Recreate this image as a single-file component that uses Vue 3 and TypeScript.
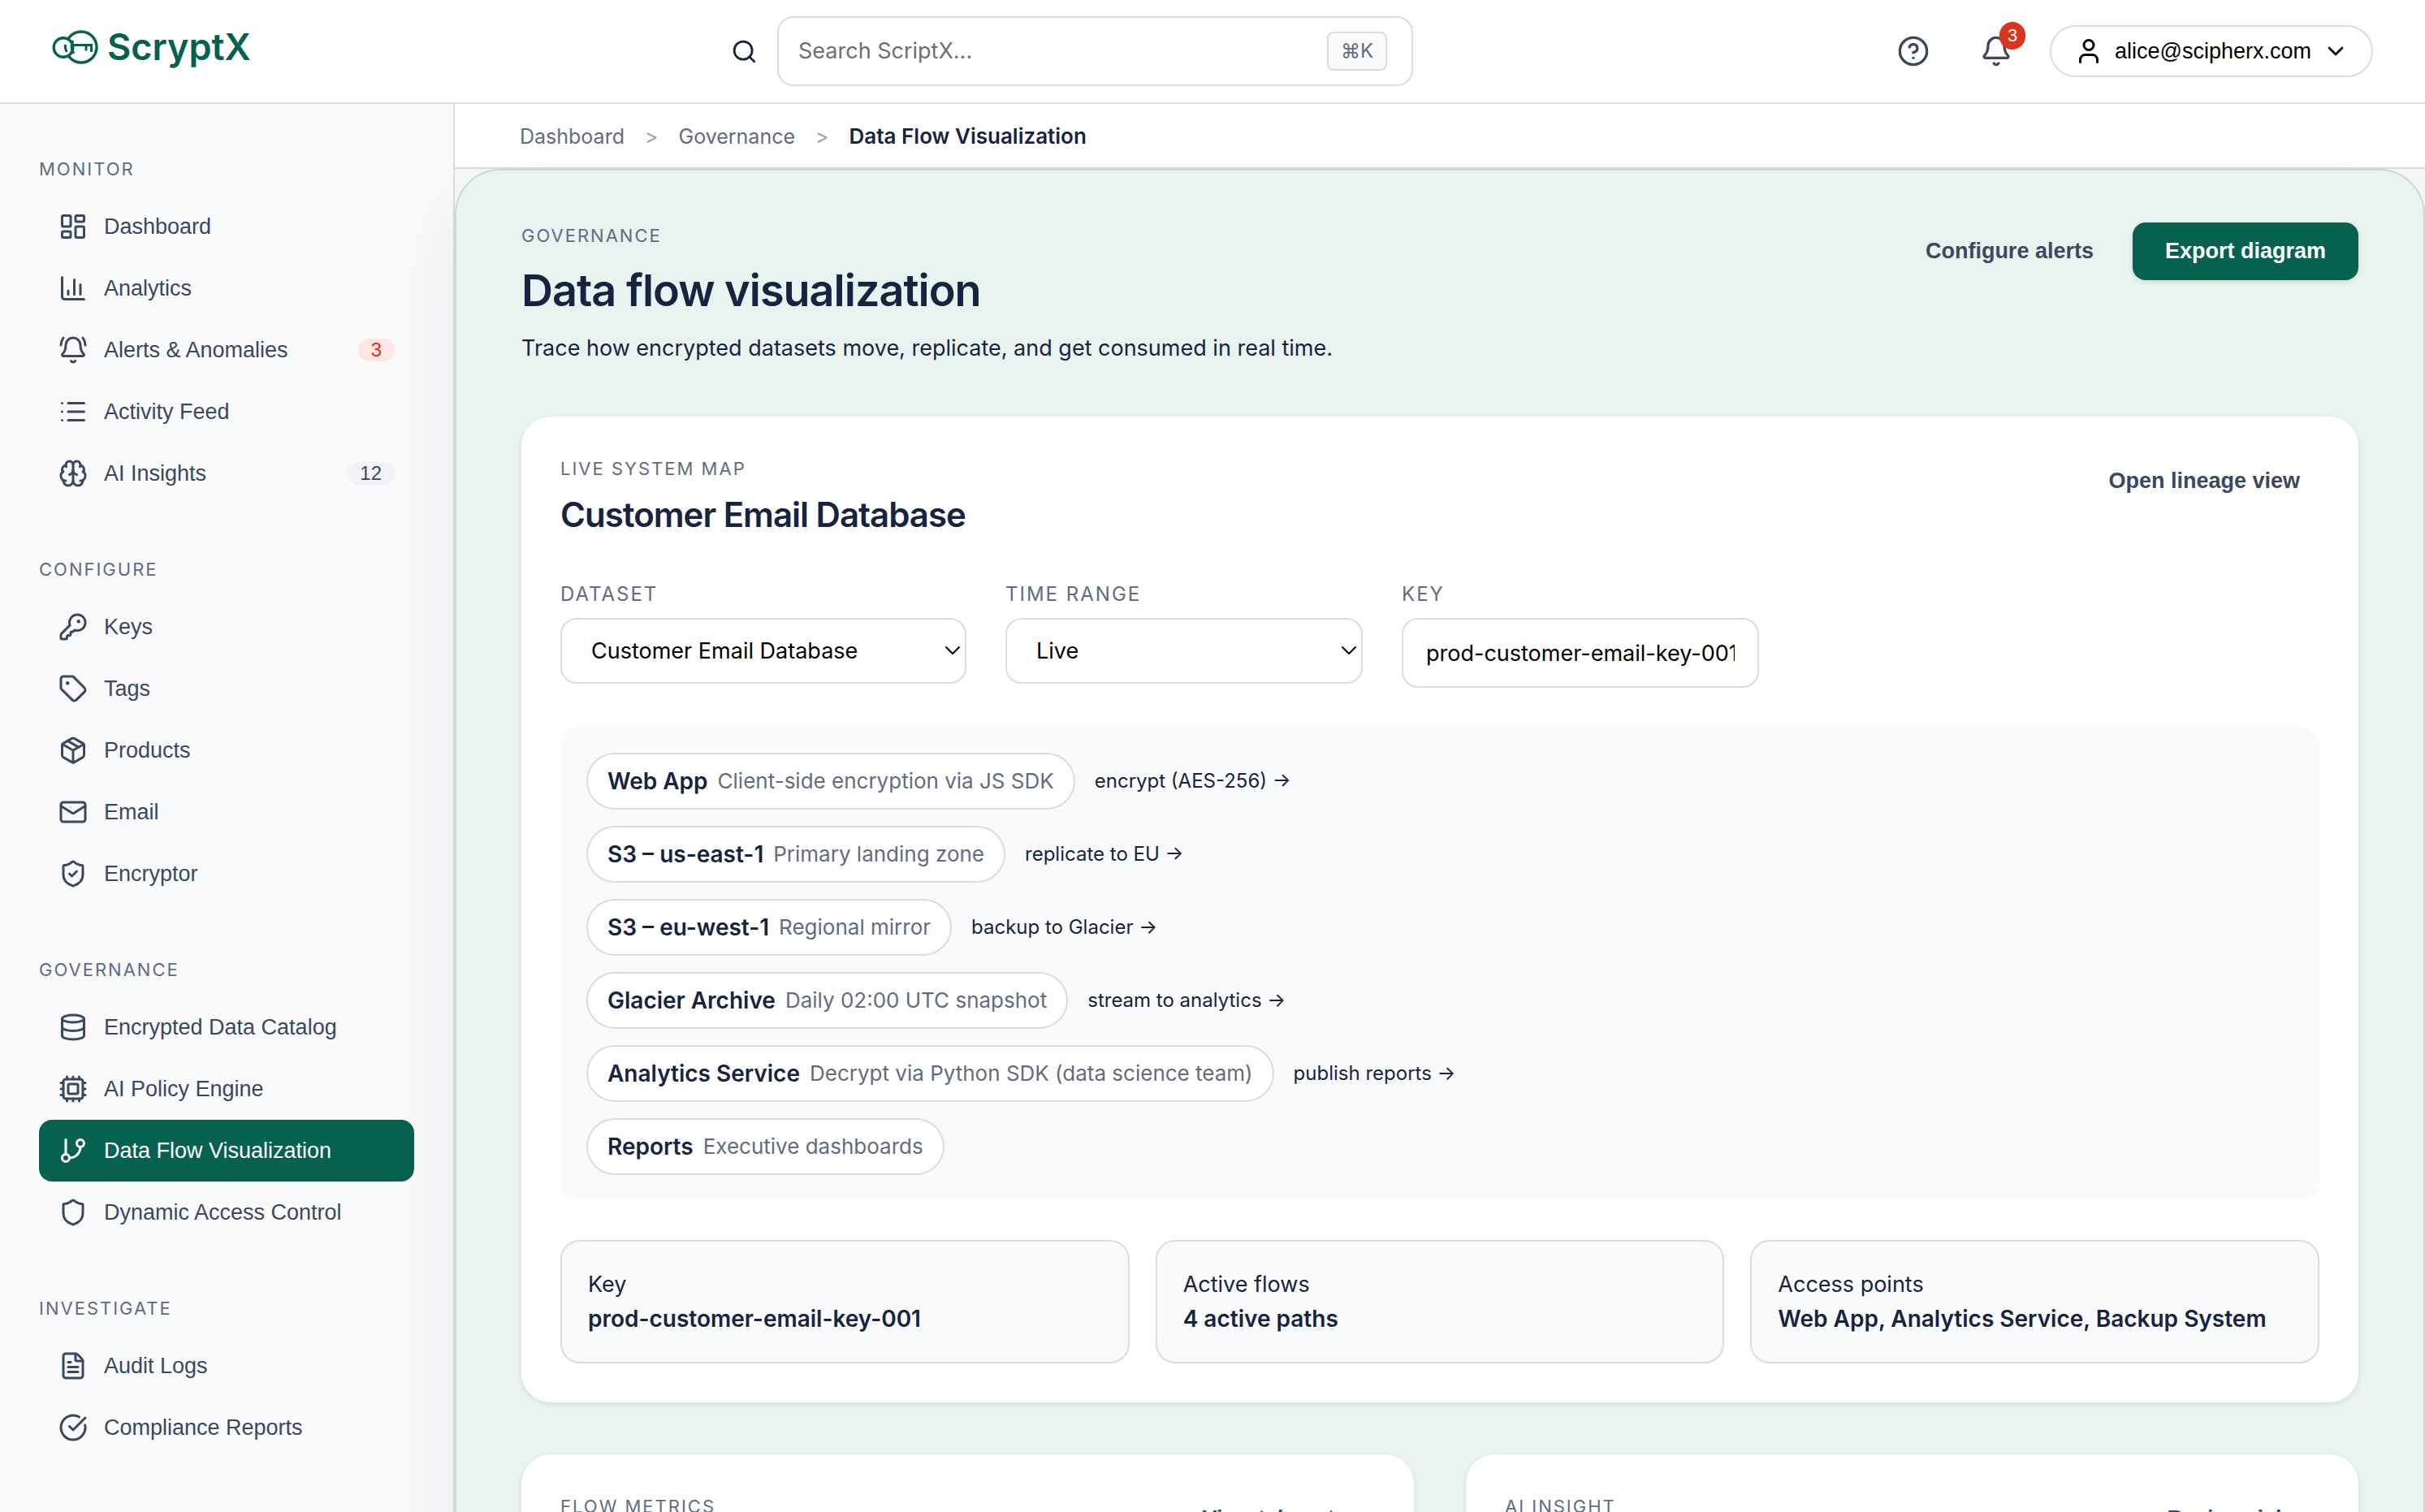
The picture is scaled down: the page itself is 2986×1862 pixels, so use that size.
<script setup lang="ts">
import { ref } from 'vue'

type IconName =
  | 'dashboard' | 'chart' | 'bellRing' | 'list' | 'brain' | 'key' | 'tag' | 'box' | 'mail'
  | 'shieldCheck' | 'database' | 'cpu' | 'branch' | 'shield' | 'file' | 'checkCircle'

interface NavItem {
  label: string
  icon: IconName
  count?: number
  alert?: boolean
}

interface NavSection {
  title: string
  items: NavItem[]
}

interface FlowNode {
  name: string
  detail: string
  next?: string
}

const shieldOutline =
  'M20 13c0 5-3.5 7.5-7.66 8.95a1 1 0 0 1-.67-.01C7.5 20.5 4 18 4 13V6a1 1 0 0 1 1-1c2 0 4.5-1.2 6.24-2.72a1.17 1.17 0 0 1 1.52 0C14.51 3.81 17 5 19 5a1 1 0 0 1 1 1z'

const icons: Record<IconName, string[]> = {
  dashboard: [
    'M4 3h5a1 1 0 0 1 1 1v7a1 1 0 0 1-1 1H4a1 1 0 0 1-1-1V4a1 1 0 0 1 1-1z',
    'M15 3h5a1 1 0 0 1 1 1v3a1 1 0 0 1-1 1h-5a1 1 0 0 1-1-1V4a1 1 0 0 1 1-1z',
    'M15 12h5a1 1 0 0 1 1 1v7a1 1 0 0 1-1 1h-5a1 1 0 0 1-1-1v-7a1 1 0 0 1 1-1z',
    'M4 16h5a1 1 0 0 1 1 1v3a1 1 0 0 1-1 1H4a1 1 0 0 1-1-1v-3a1 1 0 0 1 1-1z',
  ],
  chart: ['M3 3v16a2 2 0 0 0 2 2h16', 'M18 17V9', 'M13 17V5', 'M8 17v-3'],
  bellRing: [
    'M10.268 21a2 2 0 0 0 3.464 0',
    'M22 8c0-2.3-.8-4.3-2-6',
    'M3.262 15.326A1 1 0 0 0 4 17h16a1 1 0 0 0 .74-1.673C19.41 13.956 18 12.499 18 8A6 6 0 0 0 6 8c0 4.499-1.411 5.956-2.738 7.326',
    'M4 2C2.8 3.7 2 5.7 2 8',
  ],
  list: ['M3 5h.01', 'M3 12h.01', 'M3 19h.01', 'M8 5h13', 'M8 12h13', 'M8 19h13'],
  brain: [
    'M12 18V5',
    'M15 13a4.17 4.17 0 0 1-3-4 4.17 4.17 0 0 1-3 4',
    'M17.598 6.5A3 3 0 1 0 12 5a3 3 0 1 0-5.598 1.5',
    'M17.997 5.125a4 4 0 0 1 2.526 5.77',
    'M18 18a4 4 0 0 0 2-7.464',
    'M19.967 17.483A4 4 0 1 1 12 18a4 4 0 1 1-7.967-.517',
    'M6 18a4 4 0 0 1-2-7.464',
    'M6.003 5.125a4 4 0 0 0-2.526 5.77',
  ],
  key: [
    'M2.586 17.414A2 2 0 0 0 2 18.828V21a1 1 0 0 0 1 1h3a1 1 0 0 0 1-1v-1a1 1 0 0 1 1-1h1a1 1 0 0 0 1-1v-1a1 1 0 0 1 1-1h.172a2 2 0 0 0 1.414-.586l.814-.814a6.5 6.5 0 1 0-4-4z',
    'M16 7.5a.5.5 0 1 0 1 0a.5.5 0 1 0-1 0',
  ],
  tag: [
    'M12.586 2.586A2 2 0 0 0 11.172 2H4a2 2 0 0 0-2 2v7.172a2 2 0 0 0 .586 1.414l8.704 8.704a2.426 2.426 0 0 0 3.42 0l6.58-6.58a2.426 2.426 0 0 0 0-3.42z',
    'M7 7.5a.5.5 0 1 0 1 0a.5.5 0 1 0-1 0',
  ],
  box: [
    'M11 21.73a2 2 0 0 0 2 0l7-4A2 2 0 0 0 21 16V8a2 2 0 0 0-1-1.73l-7-4a2 2 0 0 0-2 0l-7 4A2 2 0 0 0 3 8v8a2 2 0 0 0 1 1.73z',
    'M12 22V12',
    'M3.29 7 12 12l8.71-5',
    'm7.5 4.27 9 5.15',
  ],
  mail: [
    'M4 4h16a2 2 0 0 1 2 2v12a2 2 0 0 1-2 2H4a2 2 0 0 1-2-2V6a2 2 0 0 1 2-2z',
    'm22 7-8.991 5.727a2 2 0 0 1-2.009 0L2 7',
  ],
  shieldCheck: [shieldOutline, 'm9 12 2 2 4-4'],
  database: [
    'M3 5a9 3 0 1 0 18 0a9 3 0 1 0-18 0',
    'M3 5V19A9 3 0 0 0 21 19V5',
    'M3 12A9 3 0 0 0 21 12',
  ],
  cpu: [
    'M12 20v2', 'M12 2v2', 'M17 20v2', 'M17 2v2', 'M2 12h2', 'M2 17h2', 'M2 7h2',
    'M20 12h2', 'M20 17h2', 'M20 7h2', 'M7 20v2', 'M7 2v2',
    'M6 4h12a2 2 0 0 1 2 2v12a2 2 0 0 1-2 2H6a2 2 0 0 1-2-2V6a2 2 0 0 1 2-2z',
    'M9 8h6a1 1 0 0 1 1 1v6a1 1 0 0 1-1 1H9a1 1 0 0 1-1-1V9a1 1 0 0 1 1-1z',
  ],
  branch: [
    'M6 3v12',
    'M15 6a3 3 0 1 0 6 0a3 3 0 1 0-6 0',
    'M3 18a3 3 0 1 0 6 0a3 3 0 1 0-6 0',
    'M18 9a9 9 0 0 1-9 9',
  ],
  shield: [shieldOutline],
  file: [
    'M6 22a2 2 0 0 1-2-2V4a2 2 0 0 1 2-2h8a2.4 2.4 0 0 1 1.704.706l3.588 3.588A2.4 2.4 0 0 1 20 8v12a2 2 0 0 1-2 2z',
    'M14 2v5a1 1 0 0 0 1 1h5', 'M10 9H8', 'M16 13H8', 'M16 17H8',
  ],
  checkCircle: ['M21.801 10A10 10 0 1 1 17 3.335', 'm9 11 3 3L22 4'],
}

const sections: NavSection[] = [
  {
    title: 'Monitor',
    items: [
      { label: 'Dashboard', icon: 'dashboard' },
      { label: 'Analytics', icon: 'chart' },
      { label: 'Alerts & Anomalies', icon: 'bellRing', count: 3, alert: true },
      { label: 'Activity Feed', icon: 'list' },
      { label: 'AI Insights', icon: 'brain', count: 12 },
    ],
  },
  {
    title: 'Configure',
    items: [
      { label: 'Keys', icon: 'key' },
      { label: 'Tags', icon: 'tag' },
      { label: 'Products', icon: 'box' },
      { label: 'Email', icon: 'mail' },
      { label: 'Encryptor', icon: 'shieldCheck' },
    ],
  },
  {
    title: 'Governance',
    items: [
      { label: 'Encrypted Data Catalog', icon: 'database' },
      { label: 'AI Policy Engine', icon: 'cpu' },
      { label: 'Data Flow Visualization', icon: 'branch' },
      { label: 'Dynamic Access Control', icon: 'shield' },
    ],
  },
  {
    title: 'Investigate',
    items: [
      { label: 'Audit Logs', icon: 'file' },
      { label: 'Compliance Reports', icon: 'checkCircle' },
    ],
  },
]

const nodes: FlowNode[] = [
  { name: 'Web App', detail: 'Client-side encryption via JS SDK', next: 'encrypt (AES-256)' },
  { name: 'S3 – us-east-1', detail: 'Primary landing zone', next: 'replicate to EU' },
  { name: 'S3 – eu-west-1', detail: 'Regional mirror', next: 'backup to Glacier' },
  { name: 'Glacier Archive', detail: 'Daily 02:00 UTC snapshot', next: 'stream to analytics' },
  { name: 'Analytics Service', detail: 'Decrypt via Python SDK (data science team)', next: 'publish reports' },
  { name: 'Reports', detail: 'Executive dashboards' },
]

const summary = [
  { label: 'Key', value: 'prod-customer-email-key-001' },
  { label: 'Active flows', value: '4 active paths' },
  { label: 'Access points', value: 'Web App, Analytics Service, Backup System' },
]

const active = ref('Data Flow Visualization')
const query = ref('')
const dataset = ref('Customer Email Database')
const range = ref('Live')
const keyName = ref('prod-customer-email-key-001')
</script>

<template>
  <div class="app">
    <header class="topbar">
      <a class="brand" href="#">
        <svg class="brand-mark" viewBox="0 0 58 43" fill="none" stroke="currentColor" aria-hidden="true">
          <circle cx="36" cy="21" r="19" stroke-width="3.4" />
          <circle cx="14" cy="21.500" r="11.800" fill="#fff" stroke-width="3.4" />
          <path d="M17 18c-2 3 0 5 1 9" stroke-width="3" />
          <path d="M26 13c-3 5-2 11 1 16" stroke-width="3" />
          <path d="M26 18.500h22.500v8.500M42 18.500v7" stroke-width="3" />
        </svg>
        <span class="brand-name">ScryptX</span>
      </a>

      <div class="search">
        <svg class="search-icon" viewBox="0 0 24 24" aria-hidden="true">
          <path d="m21 21-4.340-4.340" />
          <circle cx="11" cy="11" r="8" />
        </svg>
        <div class="search-box">
          <input v-model="query" type="text" placeholder="Search ScriptX..." aria-label="Search ScriptX" />
          <kbd>⌘K</kbd>
        </div>
      </div>

      <div class="actions">
        <button class="icon-button" type="button" aria-label="Help">
          <svg viewBox="0 0 24 24" aria-hidden="true">
            <circle cx="12" cy="12" r="10" />
            <path d="M9.090 9a3 3 0 0 1 5.830 1c0 2-3 3-3 3" />
            <path d="M12 17h.01" />
          </svg>
        </button>
        <button class="icon-button" type="button" aria-label="Notifications">
          <svg viewBox="0 0 24 24" aria-hidden="true">
            <path d="M10.268 21a2 2 0 0 0 3.464 0" />
            <path :d="icons.bellRing[2]" />
          </svg>
          <span class="notice">3</span>
        </button>
        <button class="account" type="button">
          <svg class="account-user" viewBox="0 0 24 24" aria-hidden="true">
            <path d="M19 21v-2a4 4 0 0 0-4-4H9a4 4 0 0 0-4 4v2" />
            <circle cx="12" cy="7" r="4" />
          </svg>
          alice@scipherx.com
          <svg class="account-caret" viewBox="0 0 24 24" aria-hidden="true"><path d="m6 9 6 6 6-6" /></svg>
        </button>
      </div>
    </header>

    <div class="body">
      <aside class="sidebar">
        <section v-for="section in sections" :key="section.title">
          <h2 class="eyebrow nav-title">{{ section.title }}</h2>
          <nav :aria-label="section.title">
            <button
              v-for="item in section.items"
              :key="item.label"
              type="button"
              class="nav-item"
              :class="{ active: item.label === active }"
              @click="active = item.label"
            >
              <svg viewBox="0 0 24 24" aria-hidden="true">
                <path v-for="d in icons[item.icon]" :key="d" :d="d" />
              </svg>
              <span class="nav-label">{{ item.label }}</span>
              <span v-if="item.count" class="count" :class="{ alert: item.alert }">{{ item.count }}</span>
            </button>
          </nav>
        </section>
      </aside>

      <main class="content">
        <nav class="crumbs" aria-label="Breadcrumb">
          <a href="#">Dashboard</a>
          <span class="sep">&gt;</span>
          <a href="#">Governance</a>
          <span class="sep">&gt;</span>
          <strong>Data Flow Visualization</strong>
        </nav>

        <div class="panel">
          <div class="page-head">
            <div class="page-title">
              <p class="eyebrow">Governance</p>
              <h1>Data flow visualization</h1>
              <p class="lead">Trace how encrypted datasets move, replicate, and get consumed in real time.</p>
            </div>
            <div class="page-actions">
              <button class="btn" type="button">Configure alerts</button>
              <button class="btn primary" type="button">Export diagram</button>
            </div>
          </div>

          <section class="card">
            <div class="card-head">
              <div class="card-title">
                <p class="eyebrow">Live system map</p>
                <h2>Customer Email Database</h2>
              </div>
              <button class="btn small" type="button">Open lineage view</button>
            </div>

            <div class="filters">
              <div class="field dataset">
                <label for="dataset">Dataset</label>
                <div class="select">
                  <select id="dataset" v-model="dataset">
                    <option>Customer Email Database</option>
                  </select>
                  <svg viewBox="0 0 24 24" aria-hidden="true"><path d="m4 8 8 8 8-8" /></svg>
                </div>
              </div>
              <div class="field">
                <label for="range">Time range</label>
                <div class="select">
                  <select id="range" v-model="range">
                    <option>Live</option>
                  </select>
                  <svg viewBox="0 0 24 24" aria-hidden="true"><path d="m4 8 8 8 8-8" /></svg>
                </div>
              </div>
              <div class="field">
                <label for="key-name">Key</label>
                <input id="key-name" v-model="keyName" type="text" />
              </div>
            </div>

            <ul class="flow">
              <li v-for="node in nodes" :key="node.name">
                <span class="node">
                  <strong>{{ node.name }}</strong>
                  <span>{{ node.detail }}</span>
                </span>
                <span v-if="node.next" class="edge">{{ node.next }} →</span>
              </li>
            </ul>

            <div class="summary">
              <div v-for="item in summary" :key="item.label" class="stat">
                <span>{{ item.label }}</span>
                <strong>{{ item.value }}</strong>
              </div>
            </div>
          </section>

          <div class="pair">
            <section class="card">
              <div class="card-head">
                <p class="eyebrow">Flow metrics</p>
                <button class="btn small" type="button">View telemetry</button>
              </div>
            </section>
            <section class="card">
              <div class="card-head">
                <p class="eyebrow">AI insight</p>
                <button class="btn small" type="button">Review risks</button>
              </div>
            </section>
          </div>
        </div>
      </main>
    </div>
  </div>
</template>

<style>
body {
  margin: 0;
}
</style>

<style scoped>
* {
  box-sizing: border-box;
}

.app {
  --green: #07614f;
  --ink: #16243f;
  --slate: #3a4862;
  --muted: #5f6c82;
  --line: #d9dde3;
  --soft: #f9fafc;
  display: flex;
  flex-direction: column;
  height: 100vh;
  overflow: hidden;
  background: #f5faf7;
  color: var(--ink);
  font: 27px/42px Inter, sans-serif;
}

h1,
h2,
p,
ul {
  margin: 0;
  padding: 0;
}

a {
  color: inherit;
  text-decoration: none;
}

strong {
  font-weight: 600;
}

button {
  border: 0;
  background: none;
  padding: 0;
  font: 27px/31px "Liberation Sans", Arial, sans-serif;
  cursor: pointer;
}

svg {
  flex: none;
}

.search-icon,
.icon-button svg,
.account svg,
.nav-item svg,
.select svg {
  fill: none;
  stroke: currentColor;
  stroke-width: 2;
  stroke-linecap: round;
  stroke-linejoin: round;
}

.eyebrow {
  color: var(--muted);
  font-size: 22px;
  font-weight: 400;
  line-height: 33px;
  letter-spacing: 2px;
  text-transform: uppercase;
}

.topbar {
  flex: none;
  display: flex;
  align-items: center;
  justify-content: space-between;
  height: 128px;
  padding: 0 64px;
  border-bottom: 2px solid var(--line);
  background: #fff;
}

.brand {
  display: flex;
  align-items: center;
  gap: 10px;
  width: 256px;
  padding-bottom: 10px;
  color: var(--green);
}

.brand-mark {
  width: 58px;
  height: 43px;
}

.brand-name {
  font-size: 45px;
  font-weight: 600;
  line-height: 56px;
}

.search {
  display: flex;
  align-items: center;
  gap: 24px;
  width: 840px;
}

.search-icon {
  width: 33px;
  height: 33px;
}

.search-box {
  flex: 1;
  display: flex;
  align-items: center;
  height: 86px;
  padding: 0 30px 0 24px;
  border: 2px solid var(--line);
  border-radius: 20px;
}

.search-box input {
  flex: 1;
  min-width: 0;
  padding: 0;
  border: 0;
  outline: 0;
  background: none;
  color: var(--ink);
  font: 27px/42px Inter, sans-serif;
}

.search-box input::placeholder {
  color: #6f6f6f;
}

kbd {
  width: 74px;
  height: 48px;
  border: 2px solid var(--line);
  border-radius: 8px;
  background: var(--soft);
  color: var(--muted);
  font: 24px/44px Inter, "DejaVu Sans", sans-serif;
  text-align: center;
}

.actions {
  display: flex;
  align-items: center;
  gap: 30px;
}

.icon-button {
  position: relative;
  display: flex;
  align-items: center;
  justify-content: center;
  width: 72px;
  height: 72px;
  color: var(--slate);
}

.icon-button svg {
  width: 40px;
  height: 40px;
}

.notice {
  position: absolute;
  top: 0;
  right: 0;
  min-width: 32px;
  height: 34px;
  border-radius: 17px;
  background: #d9341c;
  color: #fff;
  font-size: 22px;
  line-height: 34px;
}

.account {
  display: flex;
  align-items: center;
  gap: 14px;
  height: 64px;
  padding: 0 28px;
  border: 2px solid var(--line);
  border-radius: 32px;
  background: #fff;
  color: #000;
}

.account-user {
  width: 36px;
  height: 36px;
}

.account-caret {
  width: 32px;
  height: 32px;
}

.body {
  flex: 1;
  display: flex;
  min-height: 0;
}

.sidebar {
  flex: none;
  display: flex;
  flex-direction: column;
  gap: 64px;
  width: 560px;
  padding: 64px 48px;
  border-right: 2px solid var(--line);
  background: var(--soft);
}

.nav-title {
  margin-bottom: 16px;
}

.nav-item {
  display: flex;
  align-items: center;
  gap: 20px;
  width: 100%;
  height: 76px;
  padding: 0 24px;
  border-radius: 16px;
  color: var(--slate);
  text-align: left;
}

.nav-item.active {
  background: var(--green);
  color: #fff;
}

.nav-item svg {
  width: 36px;
  height: 36px;
}

.nav-label {
  flex: 1;
}

.count {
  padding: 0 16px;
  border-radius: 14px;
  background: #f1f2f7;
  font-size: 24px;
  line-height: 28px;
}

.count.alert {
  background: #fee7e2;
  color: #d9301a;
}

.content {
  flex: 1;
  display: flex;
  flex-direction: column;
  min-width: 0;
}

.crumbs {
  flex: none;
  display: flex;
  align-items: center;
  gap: 25px;
  height: 80px;
  padding: 2px 80px 0;
  border-bottom: 2px solid var(--line);
  background: #fff;
  color: var(--muted);
  font-size: 25px;
}

.crumbs strong {
  color: var(--ink);
  font-size: 26px;
}

.sep {
  color: #97a1b1;
}

.panel {
  flex: none;
  display: flex;
  flex-direction: column;
  gap: 64px;
  padding: 64px 80px;
  border: 2px solid #c3dbd3;
  border-radius: 56px;
  background: #e9f3ef;
  box-shadow: 0 40px 90px rgba(15, 23, 42, 0.08);
}

.page-head,
.card-head {
  display: flex;
  align-items: flex-start;
  justify-content: space-between;
}

.page-title {
  display: flex;
  flex-direction: column;
  gap: 16px;
}

h1 {
  font-size: 54px;
  font-weight: 600;
  line-height: 70px;
  letter-spacing: -1px;
}

.lead {
  line-height: 40px;
}

.page-actions {
  display: flex;
  gap: 24px;
}

.btn {
  padding: 20px 24px;
  border-radius: 16px;
  color: var(--slate);
  font-weight: 700;
}

.btn.small {
  padding: 16px 24px;
}

.btn.primary {
  padding: 20px 40px;
  background: var(--green);
  color: #fff;
  box-shadow: 0 2px 6px rgba(15, 23, 42, 0.12);
}

.card {
  display: flex;
  flex-direction: column;
  gap: 48px;
  padding: 48px;
  border-radius: 36px;
  background: #fff;
  box-shadow: 0 2px 6px rgba(15, 23, 42, 0.1);
}

.card-title {
  display: flex;
  flex-direction: column;
  gap: 8px;
}

.card h2 {
  font-size: 42px;
  font-weight: 600;
  line-height: 63px;
  letter-spacing: -1px;
}

.filters {
  display: flex;
  align-items: flex-start;
  gap: 48px;
}

.field {
  display: flex;
  flex-direction: column;
  gap: 10px;
  width: 440px;
}

.field.dataset {
  width: 500px;
}

.field label {
  color: var(--muted);
  font-size: 24px;
  line-height: 38px;
  letter-spacing: 2px;
  text-transform: uppercase;
}

.select {
  position: relative;
}

.select select,
.field input {
  display: block;
  width: 100%;
  border: 2px solid var(--line);
  border-radius: 20px;
  background: #fff;
  color: #000;
  font: 27px/42px Inter, sans-serif;
}

.select select {
  appearance: none;
  height: 81px;
  padding: 0 36px;
}

.field input {
  height: 86px;
  padding: 0 28px;
}

.select svg {
  position: absolute;
  top: 28px;
  right: 5px;
  width: 24px;
  height: 24px;
  color: #000;
  pointer-events: none;
}

.flow {
  display: flex;
  flex-direction: column;
  gap: 20px;
  padding: 32px;
  border-radius: 24px;
  background: var(--soft);
  list-style: none;
}

.flow li {
  display: flex;
  align-items: center;
  gap: 24px;
}

.node {
  display: flex;
  align-items: center;
  gap: 12px;
  padding: 12px 24px;
  border: 2px solid var(--line);
  border-radius: 35px;
  background: #fff;
  color: var(--muted);
  font-size: 26px;
}

.node strong {
  color: var(--ink);
  font-size: 28px;
}

.edge {
  font-size: 24px;
}

.summary {
  display: grid;
  grid-template-columns: repeat(3, 1fr);
  gap: 32px;
}

.stat {
  display: flex;
  flex-direction: column;
  padding: 32px;
  border: 2px solid var(--line);
  border-radius: 24px;
  background: var(--soft);
}

.stat strong {
  font-size: 28px;
}

.pair {
  display: grid;
  grid-template-columns: 1fr 1fr;
  gap: 64px;
}
</style>
